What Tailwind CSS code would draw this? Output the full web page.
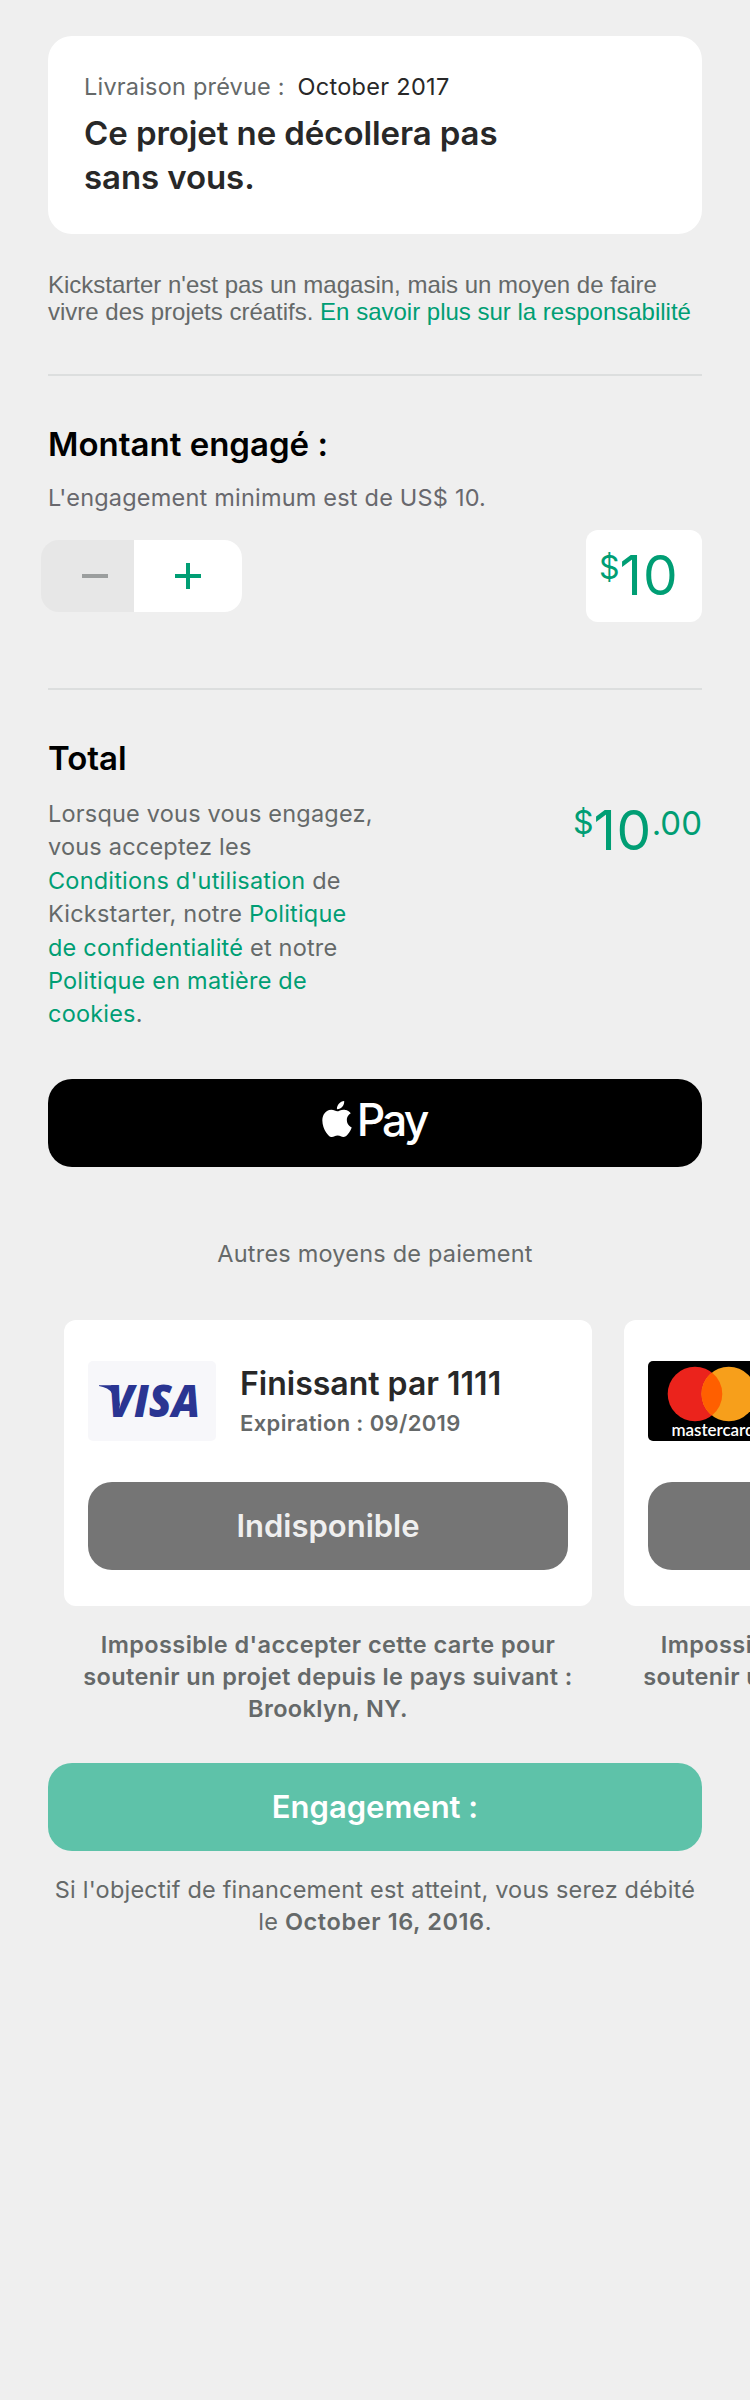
<!DOCTYPE html>
<html lang="fr">
<head>
<meta charset="utf-8">
<title>Engagement</title>
<script src="https://cdn.jsdelivr.net/npm/@tailwindcss/browser@4"></script>
</head>
<body class="bg-[#efefef]">
<main class="w-[750px] h-[2400px] overflow-hidden bg-[#efefef] px-12 pt-9 font-['Inter',sans-serif] text-[23.5px] leading-8 tracking-[0.2px] text-[#656969] whitespace-nowrap">

  <section class="h-[198px] rounded-[24px] bg-white px-9 pt-[35px]">
    <p>Livraison prévue :&nbsp; <span class="-ml-px tracking-[0.3px] text-[#282828]">October 2017</span></p>
    <h1 class="mt-2 text-[33px] leading-11 font-semibold tracking-[-0.08px] text-[#282828]">Ce projet ne décollera pas<br>sans vous.</h1>
  </section>

  <p class="mt-[37px] font-['Liberation_Sans',sans-serif] text-[24px] leading-[27px] tracking-normal">Kickstarter n'est pas un magasin, mais un moyen de faire<br>vivre des projets créatifs. <a class="text-[#009e74]">En savoir plus sur la responsabilité</a></p>

  <hr class="mt-[49px] h-0.5 border-0 bg-[#dcdede]">

  <section>
    <h2 class="mt-[46px] text-[33px] leading-11 font-semibold tracking-normal text-black">Montant engagé :</h2>
    <p class="mt-4 text-[#68686d]">L'engagement minimum est de US$ 10.</p>
    <div class="mt-4 flex items-center justify-between">
      <div class="-ml-[7px] flex h-[72px] w-[201px] overflow-hidden rounded-[18px]">
        <button class="flex w-[93px] items-center bg-[#e7e7e7] pl-[41px]">
          <svg width="26" height="26" viewBox="0 0 26 26"><path d="M0 13H26" stroke="#9b9e9e" stroke-width="4"/></svg>
        </button>
        <button class="flex flex-1 items-center justify-center bg-white">
          <svg width="26" height="26" viewBox="0 0 26 26"><path d="M0 13H26M13 0V26" stroke="#009e74" stroke-width="4"/></svg>
        </button>
      </div>
      <div class="flex h-[92px] w-[116px] items-start rounded-[12px] bg-white pt-3 pl-[13px] tracking-normal text-[#009e74]">
        <span class="mt-[6px] text-[32px] leading-10">$</span><span class="text-[55px] leading-[66px] tracking-[1px]">10</span>
      </div>
    </div>
  </section>

  <hr class="mt-[66px] h-0.5 border-0 bg-[#dcdede]">

  <section>
    <h2 class="mt-[46px] text-[33px] leading-11 font-semibold tracking-normal text-black">Total</h2>
    <div class="mt-[17px] flex h-[233px] justify-between">
      <p class="leading-[33.4px]">Lorsque vous vous engagez,<br>vous acceptez les<br><a class="text-[#009e74]">Conditions d'utilisation</a> de<br>Kickstarter, notre <a class="text-[#009e74]">Politique<br>de confidentialité</a> et notre<br><a class="text-[#009e74]">Politique en matière de</a><br><a class="text-[#009e74]">cookies</a>.</p>
      <div class="flex items-start tracking-normal text-[#009e74]">
        <span class="mt-[6px] text-[32px] leading-10">$</span><span class="text-[55px] leading-[66px] tracking-[0.5px]">10</span><span class="mt-[6px] text-[33px] leading-10">.00</span>
      </div>
    </div>
  </section>

  <button class="mt-[49px] flex h-[88px] w-full items-center justify-center gap-[5px] rounded-[24px] bg-black pr-[2px] text-white">
    <svg class="mb-[9px]" width="30" height="36" viewBox="2 0 20 24" fill="#fff"><path d="M12.152 6.896c-.948 0-2.415-1.078-3.96-1.04-2.04.027-3.91 1.183-4.961 3.014-2.117 3.675-.546 9.103 1.519 12.09 1.013 1.454 2.208 3.09 3.792 3.039 1.52-.065 2.09-.987 3.935-.987 1.831 0 2.35.987 3.96.948 1.637-.026 2.676-1.48 3.676-2.948 1.156-1.688 1.636-3.325 1.662-3.415-.039-.013-3.182-1.221-3.22-4.857-.026-3.04 2.48-4.494 2.597-4.559-1.429-2.09-3.623-2.324-4.39-2.376-2-.156-3.675 1.09-4.61 1.09zM15.53 3.83c.843-1.012 1.4-2.427 1.245-3.83-1.207.052-2.662.805-3.532 1.818-.78.896-1.454 2.338-1.273 3.714 1.338.104 2.715-.688 3.559-1.701"/></svg>
    <span class="mb-[6px] text-[44.5px] leading-[54px] font-medium tracking-[-3px]">Pay</span>
  </button>

  <p class="mt-[71px] text-center">Autres moyens de paiement</p>

  <section class="mt-[50px] ml-4 flex gap-8">
    <div class="w-[528px] shrink-0">
      <article class="h-[286px] rounded-[12px] bg-white px-6 pt-[41px] tracking-normal">
        <div class="flex h-20">
          <svg width="128" height="80" viewBox="0 0 128 80">
            <rect width="128" height="80" rx="5" fill="#f7f7fa"/>
            <path d="M11 24.200H24Q27.500 24.500 28.300 28L32 44 30 47Q25 30 19 27.500Q15 25.500 11 25Z" fill="#2a3592"/>
            <text x="20" y="55.500" textLength="92" lengthAdjust="spacingAndGlyphs" font-family="Open Sans" font-weight="800" font-style="italic" font-size="44" fill="#2a3592">VISA</text>
          </svg>
          <div class="ml-6 pt-[3px]">
            <p class="text-[32px] leading-10 font-semibold text-[#282828]">Finissant par 1111</p>
            <p class="mt-[5px] text-[22px] leading-7 font-semibold tracking-[0.36px]">Expiration : 09/2019</p>
          </div>
        </div>
        <button class="mt-[41px] flex h-[88px] w-full items-center justify-center rounded-[24px] bg-[#757575] text-[31px] font-semibold text-[#efefef]">Indisponible</button>
      </article>
      <p class="mt-[23px] text-center font-semibold tracking-[0.41px]">Impossible d'accepter cette carte pour<br>soutenir un projet depuis le pays suivant :<br>Brooklyn, NY.</p>
    </div>
    <div class="w-[528px] shrink-0">
      <article class="h-[286px] rounded-[12px] bg-white px-6 pt-[41px] tracking-normal">
        <svg width="128" height="80" viewBox="0 0 128 80">
          <rect width="128" height="80" rx="5"/>
          <circle cx="47" cy="33" r="27.300" fill="#eb231c"/>
          <circle cx="80.800" cy="33" r="27.300" fill="#f79f1b"/>
          <path d="M63.900 11.560A27.300 27.300 0 0 1 63.900 54.440A27.300 27.300 0 0 1 63.900 11.560Z" fill="#ff5f00"/>
          <text x="23.500" y="74.500" textLength="83" font-family="Lato" font-weight="600" font-size="17" fill="#fff">mastercard</text>
        </svg>
        <button class="mt-[41px] flex h-[88px] w-full items-center justify-center rounded-[24px] bg-[#757575] text-[31px] font-semibold text-[#efefef]">Indisponible</button>
      </article>
      <p class="mt-[23px] text-center font-semibold tracking-[0.41px]">Impossible d'accepter cette carte pour<br>soutenir un projet depuis le pays suivant :<br>Brooklyn, NY.</p>
    </div>
  </section>

  <button class="mt-[38px] flex h-[88px] w-full items-center justify-center rounded-[24px] bg-[#5ec2a9] text-[31px] font-semibold tracking-normal text-white">Engagement :</button>
  <p class="mt-[23px] text-center">Si l'objectif de financement est atteint, vous serez débité<br>le <b class="font-semibold tracking-[0.6px]">October 16, 2016</b>.</p>
</main>
</body>
</html>
